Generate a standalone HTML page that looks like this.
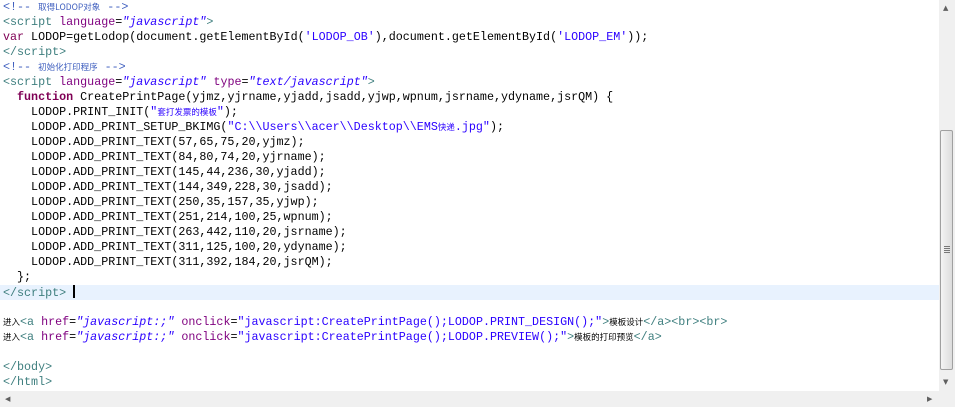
<!DOCTYPE html>
<html><head><meta charset="utf-8"><style>
body{margin:0;width:955px;height:407px;overflow:hidden;background:#fff;position:relative}
#code{position:absolute;left:0;top:0;width:939px;height:391px;overflow:hidden}
.l{height:15px;line-height:15px;white-space:pre;font-family:"Liberation Mono",monospace;font-size:11.7px;color:#000;padding-left:3px}
.cur{background:#e8f2fe}
.t{color:#3f7f7f}.a{color:#7f007f}.v{color:#2a00ff;font-style:italic}.s{color:#2a00ff}
.c{color:#3f5fbf}.k{color:#7f0055;font-weight:bold}
.cj{font-family:"Noto Sans CJK SC",sans-serif;font-size:8.5px}
.caret{display:inline-block;width:2px;height:13px;background:#000;vertical-align:-2px}
#vs{position:absolute;left:939px;top:0;width:16px;height:391px;background:#f0f0f0}
#thumb{position:absolute;left:940px;top:130px;width:13px;height:240px;border:1px solid #a0a0a0;border-radius:2px;background:linear-gradient(to right,#f4f4f4,#dcdcdc);box-sizing:border-box}
#hs{position:absolute;left:0;top:391px;width:939px;height:16px;background:#f0f0f0}
#corner{position:absolute;left:939px;top:391px;width:16px;height:16px;background:#f0f0f0}
.ar{position:absolute;font-size:7px;color:#606060;font-family:"DejaVu Sans",sans-serif}
</style></head><body>
<div id="code">
<div class="l"><span class="c">&lt;!-- <span class="cj">取得LODOP对象</span> --&gt;</span></div>
<div class="l"><span class="t">&lt;script</span> <span class="a">language</span>=<span class="v">"javascript"</span><span class="t">&gt;</span></div>
<div class="l"><span class="k" style="font-weight:normal">var</span> LODOP=getLodop(document.getElementById(<span class="s">'LODOP_OB'</span>),document.getElementById(<span class="s">'LODOP_EM'</span>));</div>
<div class="l"><span class="t">&lt;/script&gt;</span></div>
<div class="l"><span class="c">&lt;!-- <span class="cj">初始化打印程序</span> --&gt;</span></div>
<div class="l"><span class="t">&lt;script</span> <span class="a">language</span>=<span class="v">"javascript"</span> <span class="a">type</span>=<span class="v">"text/javascript"</span><span class="t">&gt;</span></div>
<div class="l">  <span class="k">function</span> CreatePrintPage(yjmz,yjrname,yjadd,jsadd,yjwp,wpnum,jsrname,ydyname,jsrQM) {</div>
<div class="l">    LODOP.PRINT_INIT(<span class="s">"<span class="cj">套打发票的模板</span>"</span>);</div>
<div class="l">    LODOP.ADD_PRINT_SETUP_BKIMG(<span class="s">"C:\\Users\\acer\\Desktop\\EMS<span class="cj">快递</span>.jpg"</span>);</div>
<div class="l">    LODOP.ADD_PRINT_TEXT(57,65,75,20,yjmz);</div>
<div class="l">    LODOP.ADD_PRINT_TEXT(84,80,74,20,yjrname);</div>
<div class="l">    LODOP.ADD_PRINT_TEXT(145,44,236,30,yjadd);</div>
<div class="l">    LODOP.ADD_PRINT_TEXT(144,349,228,30,jsadd);</div>
<div class="l">    LODOP.ADD_PRINT_TEXT(250,35,157,35,yjwp);</div>
<div class="l">    LODOP.ADD_PRINT_TEXT(251,214,100,25,wpnum);</div>
<div class="l">    LODOP.ADD_PRINT_TEXT(263,442,110,20,jsrname);</div>
<div class="l">    LODOP.ADD_PRINT_TEXT(311,125,100,20,ydyname);</div>
<div class="l">    LODOP.ADD_PRINT_TEXT(311,392,184,20,jsrQM);</div>
<div class="l">  };</div>
<div class="l cur"><span class="t">&lt;/script&gt;</span> <span class="caret"></span></div>
<div class="l"> </div>
<div class="l"><span class="cj">进入</span><span class="t">&lt;a</span> <span class="a">href</span>=<span class="v">"javascript:;"</span> <span class="a">onclick</span>=<span class="s">"javascript:CreatePrintPage();LODOP.PRINT_DESIGN();"</span><span class="t">&gt;</span><span class="cj">模板设计</span><span class="t">&lt;/a&gt;&lt;br&gt;&lt;br&gt;</span></div>
<div class="l"><span class="cj">进入</span><span class="t">&lt;a</span> <span class="a">href</span>=<span class="v">"javascript:;"</span> <span class="a">onclick</span>=<span class="s">"javascript:CreatePrintPage();LODOP.PREVIEW();"</span><span class="t">&gt;</span><span class="cj">模板的打印预览</span><span class="t">&lt;/a&gt;</span></div>
<div class="l"> </div>
<div class="l"><span class="t">&lt;/body&gt;</span></div>
<div class="l"><span class="t">&lt;/html&gt;</span></div>
</div>
<div id="vs"></div>
<div id="thumb"><div style="position:absolute;left:3px;top:115px;width:6px;height:1px;background:#777;box-shadow:0 2px #777,0 4px #777,0 6px #777"></div></div>
<div class="ar" style="left:943px;top:4px">▲</div>
<div class="ar" style="left:943px;top:378px">▼</div>
<div id="hs"></div>
<div id="corner"></div>
<div class="ar" style="left:5px;top:395px">◀</div>
<div class="ar" style="left:927px;top:395px">▶</div>
</body></html>
